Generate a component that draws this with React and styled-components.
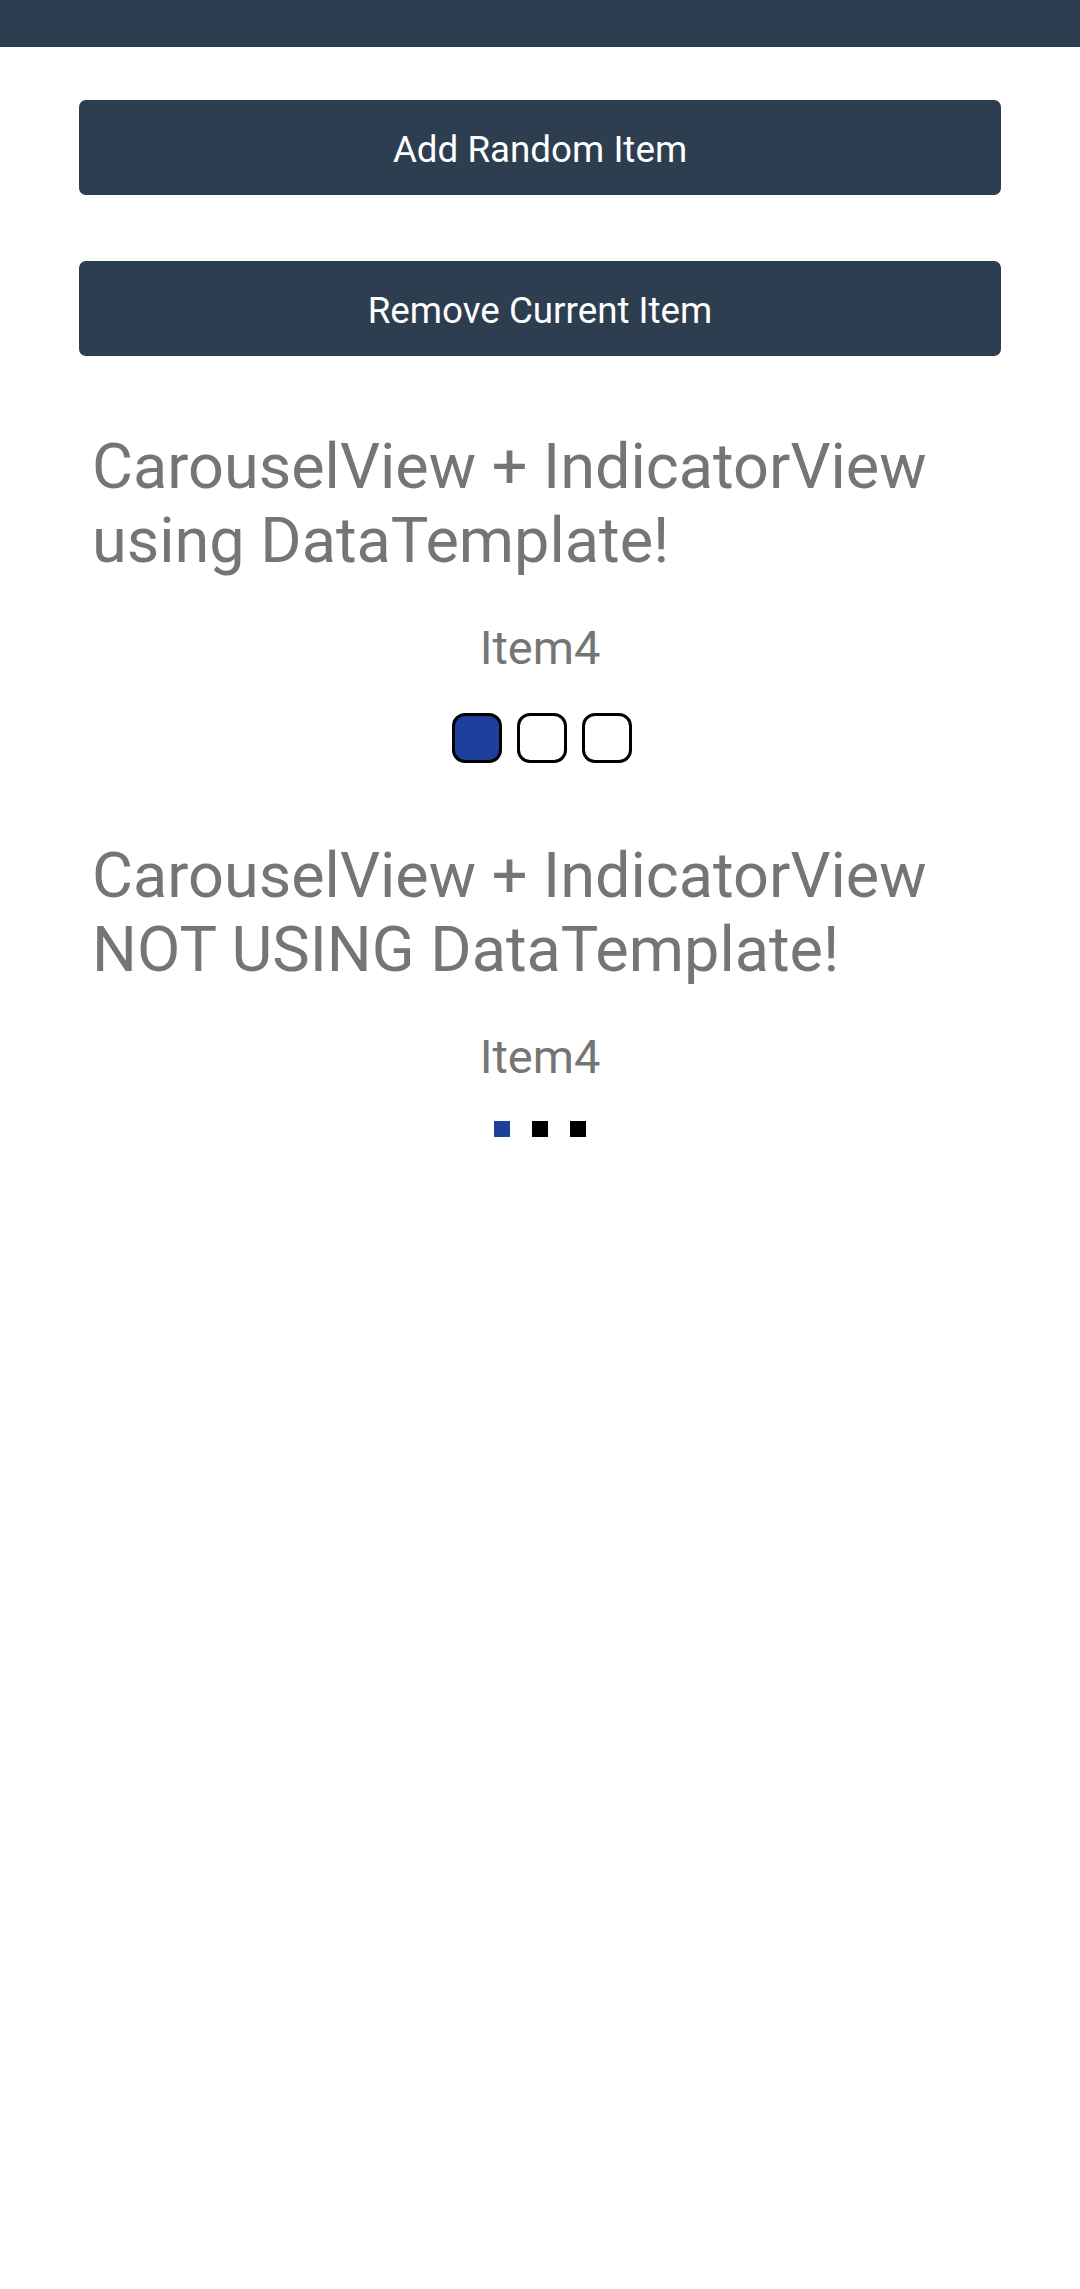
import React from 'react';
import styled, { createGlobalStyle } from 'styled-components';

const GlobalStyle = createGlobalStyle({
  'html, body': {
    margin: 0,
    padding: 0,
    background: '#ffffff',
    fontFamily: "Roboto, 'Liberation Sans', sans-serif"
  }
});

const Page = styled.div({
  width: '1080px',
  minHeight: '2289px',
  background: '#ffffff',
  display: 'flex',
  flexDirection: 'column'
});

const TopBar = styled.div({
  height: '47px',
  background: '#2d3e50'
});

const Content = styled.main({
  display: 'flex',
  flexDirection: 'column',
  padding: '53px 79px 0'
});

const ActionButton = styled.button({
  height: '95px',
  border: 'none',
  borderRadius: '7px',
  background: '#2d3e50',
  color: '#ffffff',
  fontFamily: "Roboto, 'Liberation Sans', sans-serif",
  fontSize: '36.75px',
  fontWeight: 400,
  padding: '4px 0 0',
  marginBottom: '66px',
  cursor: 'pointer'
});

const Section = styled.section({
  display: 'flex',
  flexDirection: 'column',
  alignItems: 'center',
  marginTop: props => props.$top
});

const Title = styled.h2({
  alignSelf: 'stretch',
  margin: 0,
  padding: '0 0 0 13px',
  fontSize: '63px',
  fontWeight: 400,
  lineHeight: '74px',
  color: '#757575'
});

const ItemLabel = styled.div({
  marginTop: '42px',
  fontSize: '47px',
  lineHeight: '55px',
  color: '#757575'
});

const Indicators = styled.div(props => ({
  display: 'flex',
  gap: props.$gap,
  marginTop: props.$top,
  marginLeft: props.$shift || 0
}));

const Tile = styled.span(props => ({
  width: '50px',
  height: '50px',
  boxSizing: 'border-box',
  borderRadius: '13px',
  border: '3px solid #000000',
  background: props.$active ? '#1f3f9d' : '#ffffff'
}));

const Dot = styled.span(props => ({
  width: '16px',
  height: '16px',
  background: props.$active ? '#1f3f9d' : '#000000'
}));

const items = ['Item2', 'Item3', 'Item4'];
const current = 0;

const App = () => (
  <Page>
    <GlobalStyle />
    <TopBar />
    <Content>
      <ActionButton>Add Random Item</ActionButton>
      <ActionButton>Remove Current Item</ActionButton>

      <Section $top="8px">
        <Title>CarouselView + IndicatorView using DataTemplate!</Title>
        <ItemLabel>Item4</ItemLabel>
        <Indicators $gap="15px" $top="38px" $shift="3px">
          {items.map((it, i) => <Tile key={it} $active={i === current} />)}
        </Indicators>
      </Section>

      <Section $top="76px">
        <Title>CarouselView + IndicatorView NOT USING DataTemplate!</Title>
        <ItemLabel>Item4</ItemLabel>
        <Indicators $gap="22px" $top="37px">
          {items.map((it, i) => <Dot key={it} $active={i === current} />)}
        </Indicators>
      </Section>
    </Content>
  </Page>
);

export default App;
